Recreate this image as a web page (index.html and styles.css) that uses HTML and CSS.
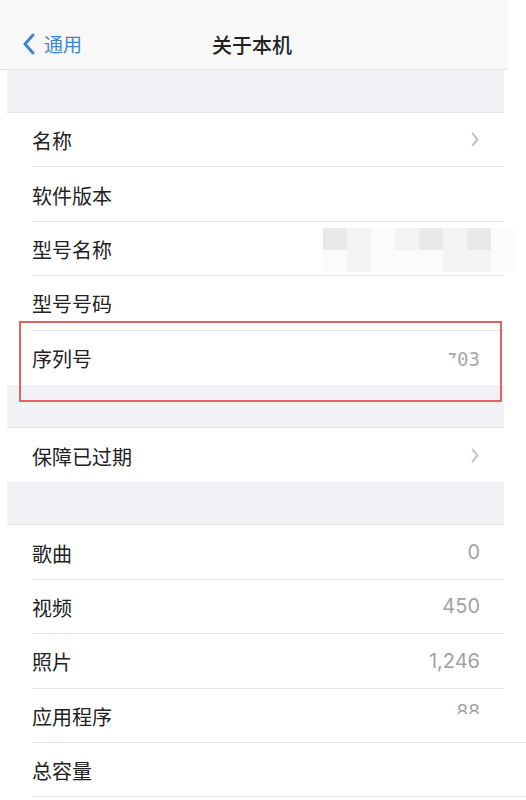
FILE: index.html
```html
<!DOCTYPE html>
<html lang="zh-CN">
<head>
  <meta charset="UTF-8">
  <meta name="viewport" content="width=device-width, initial-scale=1.0">
  <title>关于本机</title>
  <link rel="stylesheet" href="styles.css">
</head>
<body>

<div class="screen">
  <header class="nav">
    <a class="nav-back">
      <svg width="14" height="22" viewBox="0 0 14 22"><path d="M11 2 L3 11 L11 20" fill="none" stroke="#3d86cc" stroke-width="3" stroke-linecap="round" stroke-linejoin="round"/></svg>
      <span>通用</span>
    </a>
    <div class="nav-title">关于本机</div>
  </header>

  <div class="gap"></div>

  <div class="group">
    <div class="row">
      <span class="label">名称</span>
      <svg class="chev" width="8" height="15" viewBox="0 0 8 15"><path d="M1.5 1.5 L6.5 7.5 L1.5 13.5" fill="none" stroke="#c4c4c8" stroke-width="2" stroke-linecap="round" stroke-linejoin="round"/></svg>
    </div>
    <div class="row"><span class="label">软件版本</span></div>
    <div class="row row-blur">
      <span class="label">型号名称</span>
      <div class="mosaic">
        <i class="m2"></i><i class="m1"></i><i class="m0"></i><i class="m1"></i><i class="m2"></i><i class="m1"></i><i class="m2"></i><i class="m0"></i>
        <i class="m0"></i><i class="m1"></i><i class="m0"></i><i class="m0"></i><i class="m0"></i><i class="m1"></i><i class="m1"></i><i class="m0"></i>
      </div>
    </div>
    <div class="row"><span class="label">型号号码</span></div>
    <div class="row row-mark">
      <span class="label">序列号</span>
      <span class="value serial"><span class="clip7">7</span>03</span>
      <div class="mark"></div>
    </div>
  </div>

  <div class="gap"></div>

  <div class="group">
    <div class="row">
      <span class="label">保障已过期</span>
      <svg class="chev" width="8" height="15" viewBox="0 0 8 15"><path d="M1.5 1.5 L6.5 7.5 L1.5 13.5" fill="none" stroke="#c4c4c8" stroke-width="2" stroke-linecap="round" stroke-linejoin="round"/></svg>
    </div>
  </div>

  <div class="gap"></div>

  <div class="group">
    <div class="row"><span class="label">歌曲</span><span class="value">0</span></div>
    <div class="row"><span class="label">视频</span><span class="value">450</span></div>
    <div class="row"><span class="label">照片</span><span class="value">1,246</span></div>
    <div class="row row-wide"><span class="label">应用程序</span><span class="value cut">88</span></div>
    <div class="row row-wide"><span class="label">总容量</span></div>
  </div>
</div>

</body>
</html>
```

FILE: styles.css
```css
body {
  margin: 0;
  background: #fff;
  font-family: "Noto Sans CJK SC", "Noto Sans", sans-serif;
  color: #1c1c1e;
}

.screen {
  width: 526px;
  height: 800px;
  overflow: hidden;
  position: relative;
}

.nav {
  width: 508px;
  height: 70px;
  background: #f8f8f9;
  border-bottom: 1px solid #e2e2e4;
  box-sizing: border-box;
  display: flex;
  align-items: center;
  position: relative;
}

.nav-back {
  display: flex;
  align-items: center;
  gap: 8px;
  margin-left: 22px;
  margin-top: 18px;
  color: #3d86cc;
  font-size: 19px;
}

.nav-title {
  position: absolute;
  left: 0;
  right: 0;
  top: 30px;
  text-align: center;
  font-size: 20px;
  font-weight: 500;
  color: #222;
  padding-right: 4px;
}

.gap {
  margin-left: 7px;
  width: 497px;
  height: 42px;
  background: #f2f2f6;
  border-bottom: 1px solid #e3e3e6;
}

.group {
  margin-left: 7px;
  width: 497px;
  background: #fff;
}

.row {
  height: 54.4px;
  box-sizing: border-box;
  margin-left: 25px;
  padding-right: 24px;
  display: flex;
  align-items: center;
  justify-content: space-between;
  border-bottom: 1px solid #e4e4e6;
  position: relative;
}

.group .row:last-child {
  border-bottom: none;
}

.row-wide {
  margin-right: -22px;
  padding-right: 46px;
}

.group .row-wide:last-child {
  border-bottom: 1px solid #e4e4e6;
}

.label {
  font-size: 20px;
  color: #222;
  padding-top: 2px;
}

.value {
  font-family: Inter, "Noto Sans", sans-serif;
  font-size: 20px;
  color: #a2a2a6;
}

.chev {
  margin-right: 1px;
}

.serial {
  font-family: "DejaVu Sans Mono", monospace;
  font-size: 19px;
  color: #a8a8ac;
  display: flex;
  align-items: flex-start;
  padding-top: 2px;
}

.clip7 {
  display: inline-block;
  height: 9px;
  width: 8px;
  overflow: hidden;
  line-height: 22px;
  direction: rtl;
  margin-top: 1px;
}

.cut {
  height: 16px;
  overflow: hidden;
  line-height: 28px;
  align-self: flex-start;
  margin-top: 9px;
  font-size: 19px;
}

.mosaic {
  position: absolute;
  left: 291px;
  top: 6px;
  width: 192px;
  height: 44px;
  display: grid;
  grid-template-columns: repeat(8, 1fr);
}

.mosaic i {
  display: block;
}

.m0 { background: #fbfbfb; }
.m1 { background: #f3f3f3; }
.m2 { background: #e9e9e9; }

.mark {
  position: absolute;
  left: -13px;
  right: 2px;
  top: -10px;
  bottom: -17px;
  border: 2px solid #e06262;
  z-index: 2;
}
```
